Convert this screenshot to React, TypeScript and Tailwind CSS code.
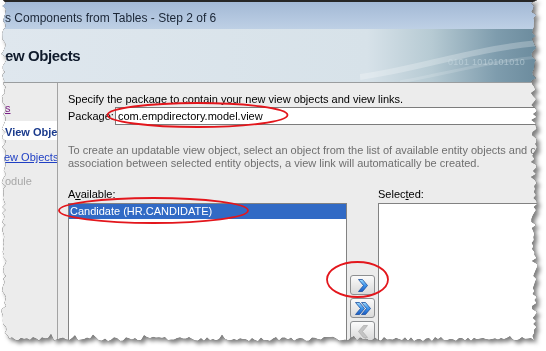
import React from 'react';

// seeded noise so the torn paper edge is the same on every render
const noise = (seed: number) => {
  let s = seed;
  return () => {
    s = (s * 16807) % 2147483647;
    return (s - 1) / 2147483646;
  };
};

const tornEdge = () => {
  const r = noise(11);
  const W = 534;
  const H = 339;
  const pts: string[] = ['3px 0px', `${W + 3}px 0px`];
  for (let y = 3; y < H; y += 3) pts.push(`${(W + (r() - 0.5) * 6).toFixed(1)}px ${y}px`);
  for (let x = W; x > 8; x -= 3) {
    const bump = r() > 0.93 ? -3 : 0;
    pts.push(`${x}px ${(H + (r() - 0.5) * 4 + bump).toFixed(1)}px`);
  }
  pts.push('8px 336px');
  for (let y = H - 6; y > 0; y -= 3) pts.push(`${(4 + (r() - 0.5) * 5).toFixed(1)}px ${y}px`);
  return `polygon(${pts.join(', ')})`;
};

const Chevron = ({ x = 0, disabled = false, left = false }: { x?: number; disabled?: boolean; left?: boolean }) => (
  <polygon
    points={left ? `${x + 9},0 ${x + 5},0 ${x},6 ${x + 5},12 ${x + 9},12 ${x + 4},6` : `${x},0 ${x + 4},0 ${x + 9},6 ${x + 4},12 ${x},12 ${x + 5},6`}
    fill={disabled ? '#c4c4c4' : 'url(#chev)'}
    stroke={disabled ? '#b0b0b0' : '#1d4f9e'}
    strokeWidth="0.8"
    strokeLinejoin="round"
  />
);

const ShuttleButton = ({ children }: { children: React.ReactNode }) => (
  <button className="flex h-[20px] w-[25px] items-center justify-center rounded-[3px] border border-[#8d8f91] bg-linear-to-b from-[#fbfbfb] to-[#d9d9d9]">
    {children}
  </button>
);

const ChevronDefs = () => (
  <defs>
    <linearGradient id="chev" x1="0" y1="0" x2="0" y2="1">
      <stop offset="0" stopColor="#9fdcff" />
      <stop offset="0.5" stopColor="#3d94ea" />
      <stop offset="1" stopColor="#1b5cc4" />
    </linearGradient>
  </defs>
);

export default function App() {
  return (
    <div className="relative h-[351px] w-[546px] overflow-hidden bg-white font-['Liberation_Sans',Arial,sans-serif] text-[11px] text-black">
      <div className="[filter:drop-shadow(0_0_0.6px_#000)_drop-shadow(3px_3px_2px_rgba(0,0,0,0.5))]">
        <div className="h-[345px] w-[540px] overflow-hidden bg-[#ececec]" style={{ clipPath: tornEdge() }}>
          {/* title bar */}
          <div className="h-[29px] border-t-2 border-[#262626] bg-linear-to-b from-[#a3b9d6] to-[#bed0e5] pl-[5px] pt-[8px] text-[12px] leading-[16px] whitespace-nowrap text-[#1a2535]">
            s Components from Tables - Step 2 of 6
          </div>

          {/* banner */}
          <div className="relative h-[54px] border-b border-[#9a9d9f] bg-[linear-gradient(90deg,#dfe7ee_0%,#d7e2e9_68%,#b6cad3_80%,#7e9cad_92%,#6a8a9c_100%)] pl-[5px] pt-[18px]">
            <div className="text-[15px] leading-[18px] font-bold tracking-[-0.4px] text-[#0f1a2b]">ew Objects</div>
            <svg className="absolute top-0 left-[360px] h-[53px] w-[180px]" viewBox="0 0 180 53">
              <path d="M0 48 C60 40 110 20 180 14" stroke="rgba(255,255,255,0.25)" strokeWidth="6" fill="none" />
              <path d="M40 53 C90 44 130 32 180 28" stroke="rgba(255,255,255,0.15)" strokeWidth="3" fill="none" />
            </svg>
            <div className="absolute top-[27px] left-[448px] text-[9px] tracking-[0.3px] whitespace-nowrap text-[rgba(205,222,230,0.55)]">
              0101 1010101010
            </div>
          </div>

          <div className="flex h-[260px]">
            {/* wizard steps */}
            <div className="w-[58px] shrink-0 overflow-hidden border-r border-[#a3a3a3] pt-[19px] leading-[13px] whitespace-nowrap">
              <div className="pl-[5px] text-[#7a1f86] underline">s</div>
              <div className="mt-[6px] h-[19px] bg-white pl-[5px] pt-[5px] font-bold text-[#1a3a8c]">View Obje</div>
              <div className="mt-[11px] pl-[4px] text-[#1f3fc4] underline">ew Objects</div>
              <div className="mt-[11px] pl-[5px] text-[#a8a8a8]">odule</div>
            </div>

            {/* page */}
            <div className="flex-1 pt-[10px] pl-[10px] leading-[13px] whitespace-nowrap">
              <div>Specify the package to contain your new view objects and view links.</div>
              <div className="mt-[1px] flex h-[18px] items-center">
                <span className="w-[47px] shrink-0">
                  Packa<span className="underline">g</span>e:
                </span>
                <div className="h-[18px] flex-1 border border-[#7c7c7c] bg-white pl-[2px] leading-[16px]">
                  com.empdirectory.model.view
                </div>
              </div>

              <div className="mt-[19px] text-[#6f6f6f]">
                <div>To create an updatable view object, select an object from the list of available entity objects and c</div>
                <div>association between selected entity objects, a view link will automatically be created.</div>
              </div>

              <div className="mt-[18px] grid grid-cols-[279px_31px_1fr] grid-rows-[15px_auto]">
                <div>
                  A<span className="underline">v</span>ailable:
                </div>
                <div />
                <div>
                  Selec<span className="underline">t</span>ed:
                </div>

                <div className="h-[140px] border border-[#828282] bg-white">
                  <div className="h-[15px] bg-[#316ac5] pl-[1px] leading-[15px] text-white">Candidate (HR.CANDIDATE)</div>
                </div>
                <div className="flex flex-col items-center gap-[3px] pt-[72px]">
                  <ShuttleButton>
                    <svg width="10" height="13" viewBox="-0.5 -0.5 10 13">
                      <ChevronDefs />
                      <Chevron />
                    </svg>
                  </ShuttleButton>
                  <ShuttleButton>
                    <svg width="16" height="13" viewBox="-0.5 -0.5 16 13">
                      <ChevronDefs />
                      <Chevron />
                      <Chevron x={6} />
                    </svg>
                  </ShuttleButton>
                  <ShuttleButton>
                    <svg width="10" height="13" viewBox="-0.5 -0.5 10 13">
                      <Chevron disabled left />
                    </svg>
                  </ShuttleButton>
                </div>
                <div className="h-[140px] border border-[#828282] bg-white" />
              </div>
            </div>
          </div>
        </div>
      </div>

      {/* red callouts drawn over the screenshot */}
      <svg className="pointer-events-none absolute inset-0" width="546" height="351">
        <g fill="none" stroke="#e3161c" strokeWidth="1.8">
          <ellipse cx="197.5" cy="115" rx="90" ry="12" />
          <ellipse cx="153.5" cy="210.5" rx="94.5" ry="12.5" />
          <ellipse cx="357.5" cy="279.5" rx="30.5" ry="17.5" />
        </g>
      </svg>
    </div>
  );
}
